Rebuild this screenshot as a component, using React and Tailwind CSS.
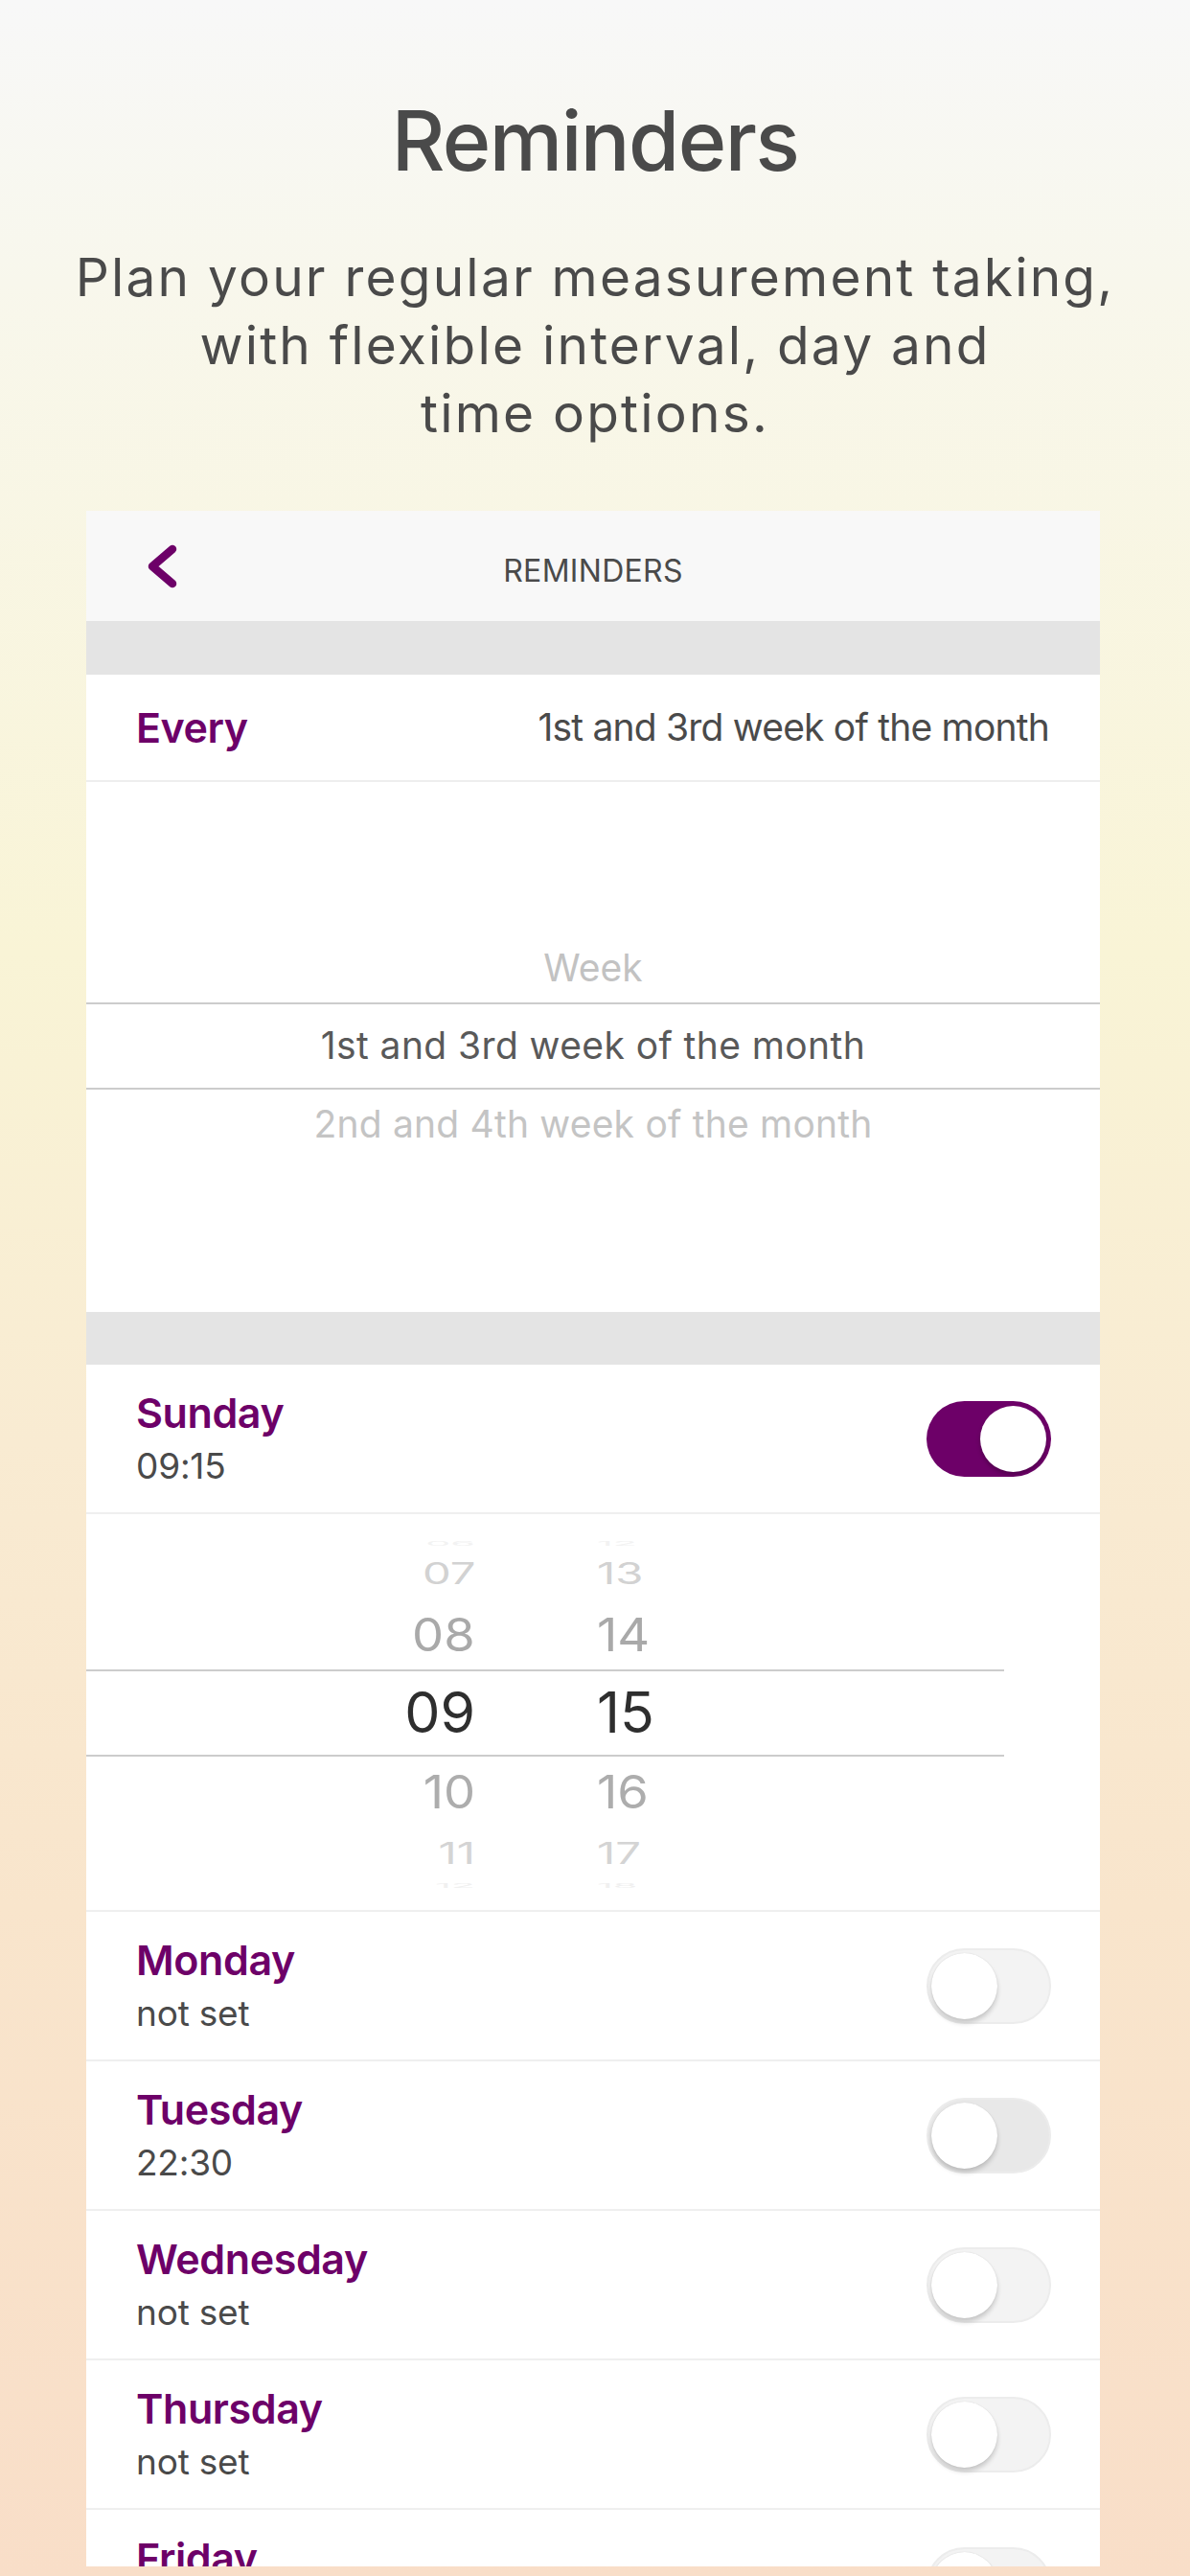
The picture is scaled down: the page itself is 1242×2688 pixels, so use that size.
import React from "react";

const PURPLE = "#6d0068";

function Toggle({ on, track = "#f3f3f3" }) {
  if (on) {
    return (
      <div className="relative w-[130px] h-[79px] rounded-full bg-[#6d0068] shrink-0">
        <div className="absolute right-[5px] top-[5px] w-[69px] h-[69px] rounded-full bg-white shadow-[0_3px_4px_rgba(0,0,0,0.25)]" />
      </div>
    );
  }
  return (
    <div
      className="relative w-[130px] h-[79px] rounded-full shrink-0 border-[2px] border-[#ececec]"
      style={{ backgroundColor: track }}
    >
      <div className="absolute left-[3px] top-[3px] w-[69px] h-[69px] rounded-full bg-white shadow-[0_4px_5px_rgba(0,0,0,0.18),0_0_1px_rgba(0,0,0,0.15)]" />
    </div>
  );
}

function DayRow({ day, sub, on, track, border = true }) {
  return (
    <div
      className={
        "h-[156px] shrink-0 flex items-center justify-between pl-[52px] pr-[51px] bg-white " +
        (border ? "border-b-2 border-[#efefef]" : "")
      }
    >
      <div className="flex flex-col self-start pt-[25px]">
        <div className="h-[50px] text-[43px] leading-[50px] font-semibold text-[#6d0068] tracking-[-0.4px]">
          {day}
        </div>
        <div className="mt-[8px] h-[46px] text-[37px] leading-[46px] text-[#4a4a4a] tracking-[-0.2px]">
          {sub}
        </div>
      </div>
      <Toggle on={on} track={track} />
    </div>
  );
}

function Num({ v, h, sy, sx, color, side }) {
  return (
    <div
      className={
        "flex items-center shrink-0 " + (side === "r" ? "justify-end" : "justify-start")
      }
      style={{ height: h }}
    >
      <span
        className={
          "block text-[59px] leading-[59px] " + (side === "r" ? "origin-right" : "origin-left")
        }
        style={{ color, transform: `scale(${sx}, ${sy})` }}
      >
        {v}
      </span>
    </div>
  );
}

const ROWS = [
  { h: 20, sy: 0.1, sx: 0.7, color: "#f2f2f2" },
  { h: 43, sy: 0.53, sx: 0.8, color: "#d2d2d2" },
  { h: 85, sy: 0.81, sx: 0.89, color: "#a9a9a9" },
  { h: 77, sy: 1, sx: 1, color: "#2e2e2e" },
  { h: 89, sy: 0.81, sx: 0.89, color: "#adadad" },
  { h: 39, sy: 0.53, sx: 0.8, color: "#d4d4d4" },
  { h: 28, sy: 0.1, sx: 0.7, color: "#f0f0f0" },
];

export default function App() {
  const hours = ["06", "07", "08", "09", "10", "11", "12"];
  const mins = ["12", "13", "14", "15", "16", "17", "18"];
  return (
    <div
      className="w-[1242px] h-[2688px] overflow-hidden flex flex-col bg-[linear-gradient(180deg,#f8f8f8_0%,#f8f7ec_11%,#f9f4d6_37%,#f9ebd2_56%,#f9e5cc_74%,#f9dec8_100%)]"
      style={{ fontFamily: "Inter, 'Noto Sans', sans-serif" }}
    >
      <div className="pt-[104px] h-[190px] text-center text-[86px] leading-[86px] font-medium text-[#4a4a4a] tracking-[-1.5px]">
        Reminders
      </div>
      <div className="mt-[64px] text-center text-[55px] leading-[71px] text-[#4a4a4a] tracking-[2.2px]">
        Plan your regular measurement taking,
        <br />
        with flexible interval, day and
        <br />
        time options.
      </div>

      <div className="mt-[66px] ml-[90px] w-[1058px] h-[2145px] shrink-0 overflow-hidden bg-white flex flex-col">
        {/* nav */}
        <div className="relative h-[115px] shrink-0 bg-[#f8f8f8] flex items-center justify-center">
          <svg
            className="absolute left-[60px] top-[32px]"
            width="40"
            height="52"
            viewBox="0 0 40 52"
          >
            <polyline
              points="30,8 9,26 30,44"
              fill="none"
              stroke={PURPLE}
              strokeWidth="8.5"
              strokeLinecap="round"
              strokeLinejoin="round"
            />
          </svg>
          <span className="pt-[10px] text-[32px] leading-[40px] text-[#4a4a4a] tracking-[0.3px]">
            REMINDERS
          </span>
        </div>
        <div className="h-[56px] shrink-0 bg-[#e4e4e4]" />

        {/* Every row */}
        <div className="h-[112px] shrink-0 flex items-center justify-between pl-[52px] pr-[53px] border-b-2 border-[#eeeeee]">
          <span className="text-[43px] font-semibold text-[#6d0068] tracking-[-0.5px]">Every</span>
          <span className="text-[39px] text-[#4a4a4a] tracking-[-0.8px]">
            1st and 3rd week of the month
          </span>
        </div>

        {/* week picker */}
        <div className="h-[553px] shrink-0 flex flex-col pt-[159px]">
          <div className="h-[71px] flex items-center justify-center text-[39px] text-[#c2c2c2]">
            Week
          </div>
          <div className="h-[91px] flex items-center justify-center border-y-2 border-[#cccccc] text-[39px] text-[#595959] tracking-[0.4px]">
            1st and 3rd week of the month
          </div>
          <div className="h-[72px] flex items-center justify-center text-[39px] text-[#c4c4c4] tracking-[0.2px]">
            2nd and 4th week of the month
          </div>
        </div>
        <div className="h-[55px] shrink-0 bg-[#e4e4e4]" />

        <DayRow day="Sunday" sub="09:15" on />

        {/* time picker */}
        <div className="relative h-[415px] shrink-0 border-b-2 border-[#efefef] flex pt-[20px]">
          <div className="absolute left-0 top-[162px] w-[958px] h-[91px] border-y-2 border-[#cccccc]" />
          <div className="w-[406px] flex flex-col">
            {hours.map((v, i) => (
              <Num key={v} v={v} side="r" {...ROWS[i]} />
            ))}
          </div>
          <div className="ml-[127px] flex flex-col">
            {mins.map((v, i) => (
              <Num key={v} v={v} side="l" {...ROWS[i]} />
            ))}
          </div>
        </div>

        <DayRow day="Monday" sub="not set" track="#f3f3f3" />
        <DayRow day="Tuesday" sub="22:30" track="#e8e8e8" />
        <DayRow day="Wednesday" sub="not set" track="#f3f3f3" />
        <DayRow day="Thursday" sub="not set" track="#f3f3f3" />
        <DayRow day="Friday" sub="not set" track="#f3f3f3" border={false} />
      </div>
    </div>
  );
}
